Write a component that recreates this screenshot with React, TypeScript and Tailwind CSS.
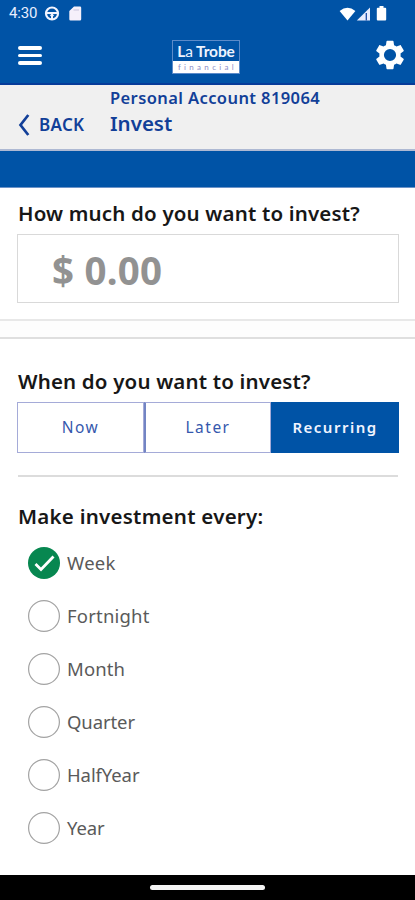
import { useState } from 'react';

const TIMINGS = ['Now', 'Later', 'Recurring'];

const FREQUENCIES = [
  { label: 'Week', spacing: 'tracking-[0.3px]' },
  { label: 'Fortnight', spacing: 'tracking-[0.2px]' },
  { label: 'Month', spacing: 'tracking-[0.1px]' },
  { label: 'Quarter', spacing: 'tracking-[-0.1px]' },
  { label: 'HalfYear', spacing: 'tracking-[-0.1px]' },
  { label: 'Year', spacing: 'tracking-[-0.1px]' },
];

function StatusBar() {
  return (
    <div className="flex h-[27px] items-center justify-between pl-[9px] pr-[28px]">
      <div className="flex items-center">
        <span className="w-[30px] whitespace-nowrap font-[Roboto,sans-serif] text-[15px] leading-[27px] tracking-[-0.2px] text-[#e8eeff]">
          4:30
        </span>
        <svg className="ml-[5px]" width="16" height="16" viewBox="0 0 16 16" fill="none" stroke="#f2f4ff">
          <circle cx="8" cy="7.5" r="6" strokeWidth="2.2" />
          <path d="M2 7h12M8 8v5" strokeWidth="2" />
          <path d="M5.5 8.7h5L8 11.5z" fill="#f2f4ff" stroke="none" />
        </svg>
        <svg className="ml-[8px]" width="14" height="16" viewBox="0 0 14 16">
          <path d="M6 .5h6a1.2 1.2 0 0 1 1.2 1.2v11.6a1.2 1.2 0 0 1-1.2 1.200H2.500a1.200 1.200 0 0 1-1.200-1.200V5z" fill="#f5f0fa" />
          <path d="M5.500 4H11" stroke="#c9c3dc" />
        </svg>
      </div>
      <div className="flex items-center">
        <svg width="17" height="14" viewBox="0 0 17 14">
          <path d="M.6 4Q8.500-2.600 16.400 4L8.500 13.400z" fill="#fff" />
        </svg>
        <svg width="15" height="14" viewBox="0 0 15 14">
          <path d="M14 .5V13.500H.8z" fill="#e7ecff" />
          <path d="M10.300 6v7.500" stroke="#1a4ba8" strokeWidth="1.3" />
        </svg>
        <svg className="ml-[5px]" width="11" height="15" viewBox="0 0 11 15">
          <path d="M3.500 0h4v1.700h1.700a1 1 0 0 1 1 1v10.800a1 1 0 0 1-1 1H1.800a1 1 0 0 1-1-1V2.700a1 1 0 0 1 1-1h1.700z" fill="#fff" />
        </svg>
      </div>
    </div>
  );
}

function Header() {
  return (
    <div className="flex h-[58px] items-start justify-between border-b-2 border-[#063b99] pl-[18px] pr-[8px]">
      <button aria-label="Menu" className="mt-[19px] flex w-[24px] flex-col gap-[4px]">
        <span className="h-[3.5px] rounded-sm bg-white" />
        <span className="h-[3.5px] rounded-sm bg-white" />
        <span className="h-[3.5px] rounded-sm bg-white" />
      </button>
      <div className="mr-[3px] mt-[13px] flex h-[34px] w-[68px] flex-col border border-[#5c8bc9]">
        <div className="h-[20px] whitespace-nowrap text-center font-[Lato,sans-serif] text-[15.5px] font-bold leading-[20px] tracking-[-0.1px] text-[#eef3ff]">
          L<span className="font-normal">a</span> Trobe
        </div>
        <div className="flex-1 bg-white pl-[5px] font-[Lato,sans-serif] text-[8px] leading-[12px] tracking-[3.3px] text-[#8b8fc9]">
          financial
        </div>
      </div>
      <button aria-label="Settings" className="mt-[11px]">
        <svg width="34" height="34" viewBox="0 0 24 24" fill="#fff">
          <path d="M19.430 12.980c.04-.32.07-.64.07-.98s-.03-.66-.07-.98l2.110-1.650c.19-.15.24-.42.12-.64l-2-3.460c-.12-.22-.39-.3-.61-.22l-2.490 1c-.52-.4-1.080-.73-1.690-.98l-.38-2.650C14.460 2.180 14.250 2 14 2h-4c-.25 0-.46.18-.49.42l-.38 2.650c-.61.25-1.170.59-1.690.98l-2.490-1c-.23-.09-.49 0-.61.22l-2 3.460c-.13.22-.07.49.12.64l2.110 1.650c-.04.32-.07.65-.07.98s.03.66.07.98l-2.110 1.650c-.19.15-.24.42-.12.64l2 3.460c.12.22.39.3.61.22l2.490-1c.52.4 1.080.73 1.690.98l.38 2.650c.03.24.24.42.49.42h4c.25 0 .46-.18.49-.42l.38-2.650c.61-.25 1.170-.59 1.690-.98l2.490 1c.23.09.49 0 .61-.22l2-3.460c.12-.22.07-.49-.12-.64zM12 16.300a4.300 4.300 0 1 1 0-8.600 4.300 4.300 0 0 1 0 8.600z" />
        </svg>
      </button>
    </div>
  );
}

function AccountBar() {
  return (
    <div className="flex h-[66px] border-b-2 border-[#aeb9d3] bg-[#f0f0f0] font-semibold text-[#123f98]">
      <button className="mt-[27px] flex h-[26px] w-[110px] items-center pl-[18px]">
        <svg width="12" height="22" viewBox="0 0 12 22" fill="none" stroke="#123f98" strokeWidth="2.7">
          <path d="M10.300 1L2.500 11l7.800 10" />
        </svg>
        <span className="ml-[9px] text-[17px] leading-[24px] tracking-[0.3px]">BACK</span>
      </button>
      <div className="whitespace-nowrap">
        <p className="mt-[1px] text-[16.5px] leading-[24px] tracking-[0.4px]">Personal Account 819064</p>
        <p className="text-[20.5px] leading-[26px]">Invest</p>
      </div>
    </div>
  );
}

export default function App() {
  const [timing, setTiming] = useState('Recurring');
  const [frequency, setFrequency] = useState('Week');

  return (
    <div className="flex h-[900px] w-[415px] flex-col overflow-hidden bg-white font-['Noto_Sans','Open_Sans',sans-serif]">
      <div className="bg-[#0053a6]">
        <StatusBar />
        <Header />
      </div>
      <AccountBar />
      <div className="h-[37px] border-b border-[#6c93c8] bg-[#0053a6]" />

      <section className="h-[133px] border-b-2 border-[#e8e8e8] px-[17px] pt-[10px]">
        <h2 className="whitespace-nowrap pl-px text-[20.5px] font-semibold leading-[30px] tracking-[0.17px] text-[#171717]">
          How much do you want to invest?
        </h2>
        <div className="mt-[6px] flex h-[69px] w-[382px] items-center border-[1.5px] border-[#d9d9d9] pl-[34px]">
          <span className="mt-[3px] text-[38.5px] font-bold leading-[60px] tracking-[0.2px] text-[#929292]">$ 0.00</span>
        </div>
      </section>
      <div className="h-[18px] border-b-2 border-[#dfdfdf] bg-[#fdfdfd]" />

      <section className="px-[17px] pt-[27px]">
        <h2 className="whitespace-nowrap pl-px text-[20.5px] font-semibold leading-[30px] tracking-[0.17px] text-[#171717]">
          When do you want to invest?
        </h2>
        <div className="mt-[6px] flex h-[51px] w-[382px]">
          {TIMINGS.map((item, i) => (
            <button
              key={item}
              onClick={() => setTiming(item)}
              className={`flex items-center justify-center border text-[15.5px] tracking-[1.5px] ${
                i === 1 ? 'w-[127px] border-l-2 border-l-[#7385c4]' : i === 0 ? 'w-[127px]' : 'w-[128px]'
              } ${
                timing === item
                  ? 'border-[#0053a6] bg-[#0053a6] text-[15px] font-semibold tracking-[1.2px] text-[#f1f4ff]'
                  : 'border-[#a5abd8] bg-white text-[#3558ad]'
              }`}
            >
              {item}
            </button>
          ))}
        </div>
        <div className="ml-px mt-[22px] h-[2px] bg-[#dcdcdc]" />
      </section>

      <section className="px-[17px] pt-[24px]">
        <h2 className="whitespace-nowrap pl-px text-[20.5px] font-semibold leading-[30px] tracking-[0.25px] text-[#171717]">
          Make investment every:
        </h2>
        <div className="mt-[5px] flex flex-col pl-[11px]">
          {FREQUENCIES.map(({ label, spacing }) => (
            <button key={label} onClick={() => setFrequency(label)} className="flex h-[53px] items-center text-left">
              <svg width="32" height="32" viewBox="0 0 32 32" fill="none">
                {frequency === label ? (
                  <>
                    <circle cx="16" cy="16" r="16" fill="#078750" />
                    <path d="M7.500 17l5.500 5.500L25.500 9.500" stroke="#fff" strokeWidth="2.8" />
                  </>
                ) : (
                  <circle cx="16" cy="16" r="15.400" stroke="#a3a3a3" strokeWidth="1.2" />
                )}
              </svg>
              <span className={`ml-[7px] text-[18.5px] text-[#5a5a5a] ${spacing}`}>{label}</span>
            </button>
          ))}
        </div>
      </section>

      <div className="mt-auto flex h-[25px] items-start justify-center bg-black pt-[10px]">
        <div className="h-[5px] w-[115px] rounded-full bg-[#f5f5f5]" />
      </div>
    </div>
  );
}
